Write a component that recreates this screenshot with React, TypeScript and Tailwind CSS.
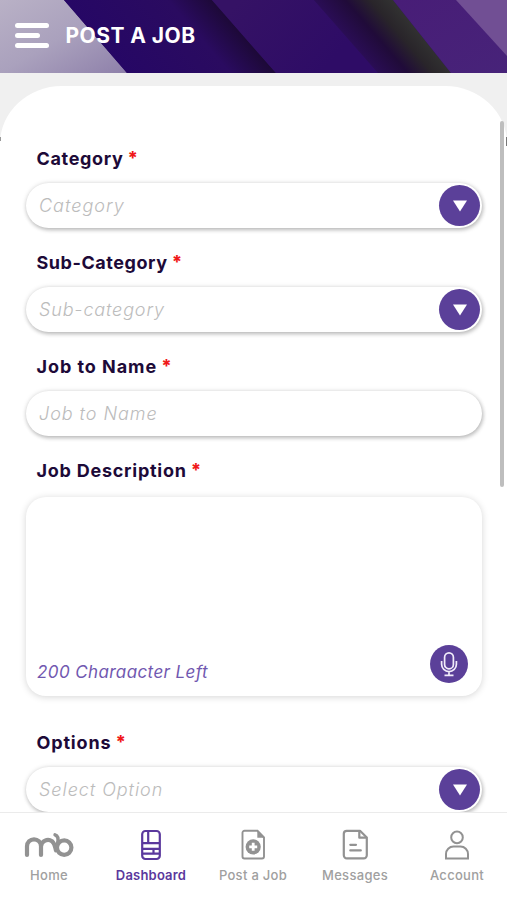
import React from "react";

const FONT = "font-['Inter','Liberation_Sans',sans-serif]";

function Header() {
  return (
    <header className="relative h-[73px] shrink-0 overflow-hidden bg-[#2b0e60]">
      <svg className="absolute inset-0" width="507" height="73" viewBox="0 0 507 73" aria-hidden="true">
        <defs>
          <linearGradient id="pale" x1="0" y1="0" x2="1" y2="1">
            <stop offset="0" stopColor="#b9b1c6" />
            <stop offset="0.5" stopColor="#aaa1bd" />
            <stop offset="1" stopColor="#8e80aa" />
          </linearGradient>
          <linearGradient id="deep" gradientUnits="userSpaceOnUse" x1="127" y1="73" x2="212" y2="0">
            <stop offset="0" stopColor="#260765" />
            <stop offset="0.7" stopColor="#2a0b60" />
            <stop offset="1" stopColor="#1d0938" />
          </linearGradient>
          <linearGradient id="mid" gradientUnits="userSpaceOnUse" x1="240" y1="0" x2="320" y2="73">
            <stop offset="0" stopColor="#351265" />
            <stop offset="1" stopColor="#2e0c66" />
          </linearGradient>
          <linearGradient id="dark" gradientUnits="userSpaceOnUse" x1="350" y1="41" x2="394" y2="3">
            <stop offset="0" stopColor="#2a0d55" />
            <stop offset="0.4" stopColor="#200b39" />
            <stop offset="0.72" stopColor="#29252a" />
            <stop offset="1" stopColor="#313131" />
          </linearGradient>
          <linearGradient id="violet" x1="0" y1="0" x2="1" y2="1">
            <stop offset="0" stopColor="#481d77" />
            <stop offset="1" stopColor="#472379" />
          </linearGradient>
        </defs>
        <path d="M0 0H64L127 73H0Z" fill="url(#pale)" />
        <path d="M64 0H212L276 73H127Z" fill="url(#deep)" />
        <path d="M212 0H314L378 73H276Z" fill="url(#mid)" />
        <path d="M314 0H393L451 73H378Z" fill="url(#dark)" />
        <path d="M393 0H507V73H451Z" fill="url(#violet)" />
        <path d="M456 0H507V56Z" fill="#714f94" />
      </svg>
      <div className="relative flex h-[71px] items-center pl-[15px]">
        <div className="flex w-[34px] flex-col gap-[5px]">
          <span className="h-[5px] rounded-full bg-white" />
          <span className="h-[5px] w-[25px] rounded-full bg-white" />
          <span className="h-[5px] rounded-full bg-white" />
        </div>
        <h1 className="ml-[16.5px] text-[21px] font-bold leading-6 tracking-[0.45px] text-white">POST A JOB</h1>
      </div>
    </header>
  );
}

function Label({ text, spacing }: { text: string; spacing: string }) {
  return (
    <label className="flex h-6 gap-[4px] pl-[10.5px] text-[18px] font-bold leading-6 text-[#1d0a38]">
      <span className={spacing}>{text}</span>
      <span className="-mt-px text-[18px] font-extrabold text-[#f01818]">*</span>
    </label>
  );
}

function Field({ placeholder, select = true, spacing }: { placeholder: string; select?: boolean; spacing: string }) {
  return (
    <div className="flex h-[45px] items-center justify-between rounded-full bg-white pl-[13px] pr-[2px] shadow-[1px_2px_4px_rgba(0,0,0,0.24),0_0_5px_rgba(0,0,0,0.12)]">
      <span className={`pt-px text-[18px] font-light italic leading-6 text-[#bcbcbc] [font-feature-settings:'cv11'] ${spacing}`}>
        {placeholder}
      </span>
      {select && (
        <span className="flex size-[41px] items-center justify-center rounded-full bg-[#5b4099]">
          <svg width="14" height="12" viewBox="0 0 14 12" aria-hidden="true">
            <path d="M0 0.5H14L7 11.5Z" fill="white" />
          </svg>
        </span>
      )}
    </div>
  );
}

function Mic() {
  return (
    <span className="flex size-[38px] items-center justify-center rounded-full bg-[#5b4099]">
      <svg width="18" height="26" viewBox="0 0 18 26" fill="none" stroke="#f1ecfa" strokeWidth="1.7" aria-hidden="true">
        <rect x="4.6" y="1.8" width="8.8" height="16" rx="4.4" />
        <path d="M1.6 10V13.2a7.4 7.4 0 0 0 14.8 0V10M9 20.6V24M4.5 24.3H13.5" />
      </svg>
    </span>
  );
}

function HomeIcon() {
  return (
    <svg width="50" height="34" viewBox="0 0 50 34" fill="none" stroke="#929292" strokeWidth="4.2" strokeLinecap="round" aria-hidden="true">
      <path d="M3 27V18.3A7 7 0 0 1 17 18.3V27M17 18.3A7 7 0 0 1 28 13.2C31 15.8 31 19 32 22.3" />
      <circle cx="40.2" cy="19.6" r="7.2" />
      <path d="M31 6.8C34.5 8 34.3 12 33.6 14.8" strokeWidth="3.4" />
    </svg>
  );
}

function DashboardIcon() {
  return (
    <svg width="22" height="34" viewBox="0 0 22 34" fill="none" stroke="#5a389d" strokeWidth="2.2" aria-hidden="true">
      <rect x="2.2" y="3" width="17.6" height="28" rx="3.2" />
      <path d="M8.2 3V15.2M2.2 15.2H19.8M2.2 20.8H19.8M2.2 25.7H19.8M13.5 20.8V25.7" />
    </svg>
  );
}

function PostIcon() {
  return (
    <svg width="26" height="34" viewBox="0 0 26 34" aria-hidden="true">
      <path d="M4.5 2.8H17.5L24 9.5V28.5a2 2 0 0 1-2 2H4.5a2 2 0 0 1-2-2V4.8a2 2 0 0 1 2-2Z" fill="none" stroke="#929292" strokeWidth="1.9" />
      <path d="M17.3 2.8V9.7H24Z" fill="#929292" />
      <circle cx="13.2" cy="18.8" r="7.6" fill="#929292" />
      <path d="M13.2 14.8V22.8M9.2 18.8H17.2" stroke="white" strokeWidth="2.8" />
    </svg>
  );
}

function MessagesIcon() {
  return (
    <svg width="26" height="34" viewBox="0 0 26 34" fill="none" stroke="#929292" strokeWidth="2.2" strokeLinejoin="round" strokeLinecap="round" aria-hidden="true">
      <path d="M4.8 2.8H18L24.8 9.5V27.3a3 3 0 0 1-3 3H4.8A3 3 0 0 1 1.8 27.3V5.8a3 3 0 0 1 3-3Z" />
      <path d="M17.3 3V9.7H24M8.3 16.8H14M8.3 22.4H18.8" />
    </svg>
  );
}

function AccountIcon() {
  return (
    <svg width="26" height="34" viewBox="0 0 26 34" fill="none" stroke="#929292" strokeWidth="2" aria-hidden="true">
      <circle cx="13" cy="9.4" r="5.8" />
      <path d="M2 30.5V26A7.5 7.5 0 0 1 9.5 18.5H16.5A7.5 7.5 0 0 1 24 26V30.5Z" />
    </svg>
  );
}

const tabs = [
  { name: "Home", icon: <HomeIcon /> },
  { name: "Dashboard", icon: <DashboardIcon />, active: true },
  { name: "Post a Job", icon: <PostIcon /> },
  { name: "Messages", icon: <MessagesIcon /> },
  { name: "Account", icon: <AccountIcon /> },
];

export default function App() {
  return (
    <div className={`relative flex h-[900px] w-[507px] flex-col overflow-hidden bg-white ${FONT}`}>
      <Header />
      <main className="h-[739px] overflow-hidden bg-[linear-gradient(#f0f0f0_68px,#ffffff_68px)] pt-[13px]">
        <div className="h-full rounded-t-[62px_58px] bg-white pl-[26px] pr-[25px] pt-[61px]">
          <Label text="Category" spacing="tracking-[0.65px]" />
          <div className="h-3" />
          <Field placeholder="Category" spacing="tracking-[1px]" />
          <div className="h-[23px]" />
          <Label text="Sub-Category" spacing="tracking-[0.55px]" />
          <div className="h-3" />
          <Field placeholder="Sub-category" spacing="tracking-[0.85px]" />
          <div className="h-[23px]" />
          <Label text="Job to Name" spacing="tracking-[0.95px]" />
          <div className="h-3" />
          <Field placeholder="Job to Name" select={false} spacing="tracking-[0.95px]" />
          <div className="h-[23px]" />
          <Label text="Job Description" spacing="tracking-[0.75px]" />
          <div className="mt-[14px] flex h-[199px] items-end justify-between rounded-[20px] bg-white pb-[13px] pl-[11px] pr-[14px] shadow-[0_1px_7px_rgba(0,0,0,0.17)]">
            <span className="-mb-px text-[17px] italic leading-6 tracking-[0.4px] text-[#7158b0] [font-feature-settings:'cv11']">200 Charaacter Left</span>
            <Mic />
          </div>
          <div className="h-[35px]" />
          <Label text="Options" spacing="tracking-[0.85px]" />
          <div className="h-3" />
          <Field placeholder="Select Option" spacing="tracking-[0.95px]" />
        </div>
      </main>
      <nav className="-ml-[2px] flex h-[88px] w-[510px] shrink-0 border-t border-[#ebebeb] bg-white pt-[15px]">
        {tabs.map((tab) => (
          <div key={tab.name} className="flex w-[102px] shrink-0 flex-col items-center">
            {tab.icon}
            <span className={`mt-[3px] whitespace-nowrap text-[13px] leading-5 ${tab.active ? "font-semibold tracking-[0.2px] text-[#5a389d]" : "font-medium tracking-[0.3px] text-[#a0a0a0]"}`}>
              {tab.name}
            </span>
          </div>
        ))}
      </nav>
      <span className="absolute left-[500px] top-[121px] h-[366px] w-[3.5px] rounded-full bg-[#bebebe]" />
      <span className="absolute left-0 top-[137px] h-1 w-[1px] bg-[#999999]" />
      <span className="absolute left-[506px] top-[137px] h-[9px] w-[1px] bg-[#777777]" />
    </div>
  );
}
